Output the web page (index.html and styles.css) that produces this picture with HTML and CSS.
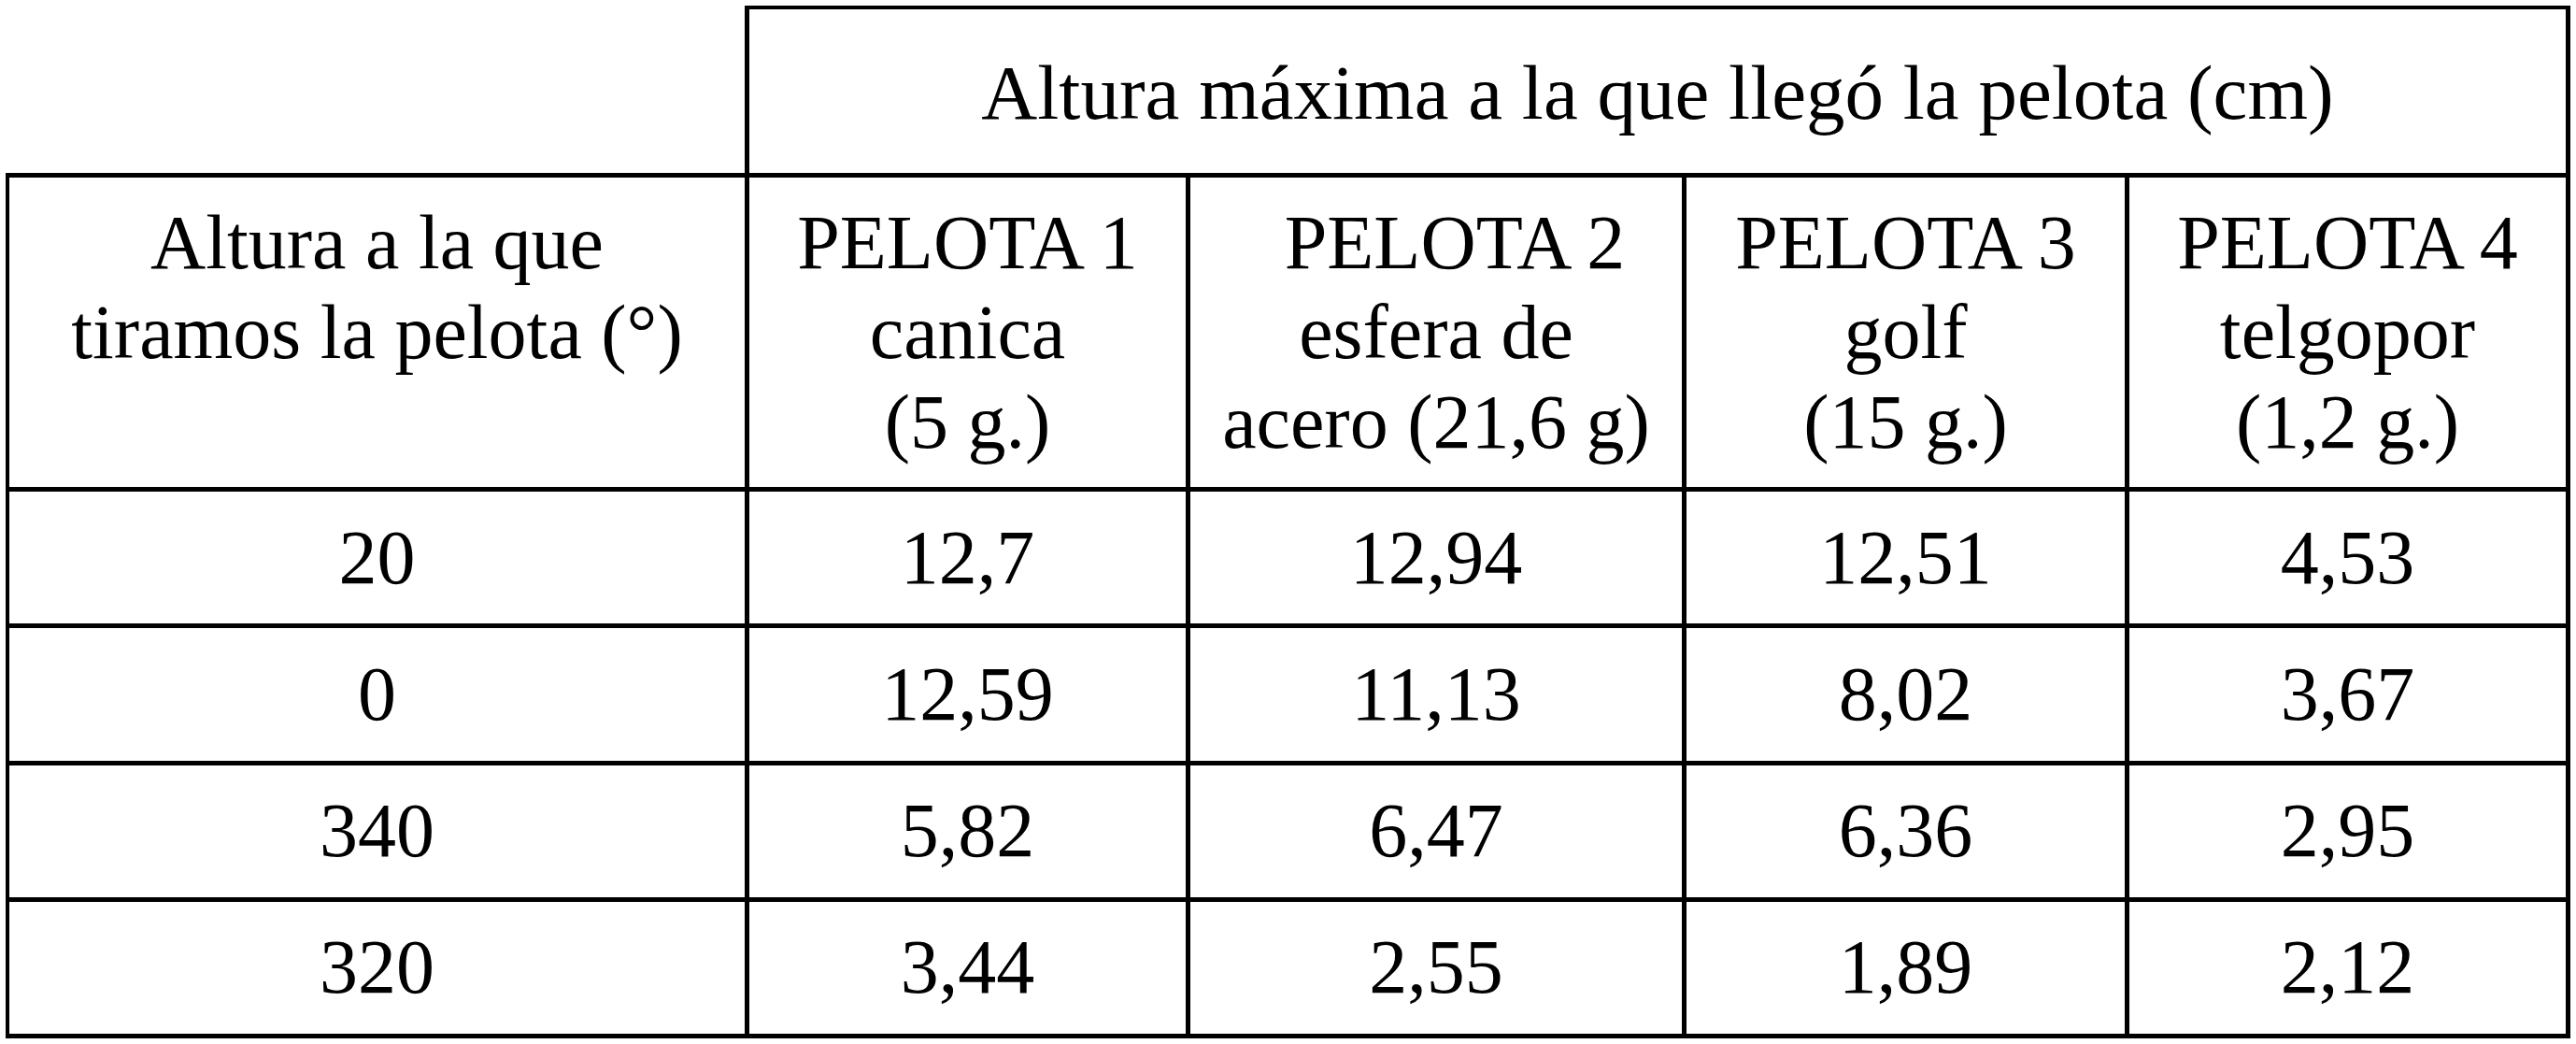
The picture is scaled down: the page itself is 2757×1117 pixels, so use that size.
FILE: index.html
```html
<!DOCTYPE html>
<html lang="es">
<head>
<meta charset="utf-8">
<title>Altura máxima a la que llegó la pelota</title>
<link rel="stylesheet" href="styles.css">
</head>
<body>
<div class="sheet" role="table">
  <div class="cell corner" role="columnheader"></div>
  <div class="cell title" role="columnheader"><span class="txt">Altura máxima a la que llegó la pelota (cm)</span></div>

  <div class="cell first head" role="columnheader"><span class="txt">Altura a la que<br>tiramos la pelota (°)</span></div>
  <div class="cell head" role="columnheader"><span class="txt">PELOTA 1<br>canica<br>(5 g.)</span></div>
  <div class="cell head" role="columnheader"><span class="txt"><span class="shift">PELOTA 2</span><br>esfera de<br>acero (21,6 g)</span></div>
  <div class="cell head" role="columnheader"><span class="txt">PELOTA 3<br>golf<br>(15 g.)</span></div>
  <div class="cell head" role="columnheader"><span class="txt">PELOTA 4<br>telgopor<br>(1,2 g.)</span></div>

  <div class="cell first" role="cell"><span class="txt">20</span></div>
  <div class="cell" role="cell"><span class="txt">12,7</span></div>
  <div class="cell" role="cell"><span class="txt">12,94</span></div>
  <div class="cell" role="cell"><span class="txt">12,51</span></div>
  <div class="cell" role="cell"><span class="txt">4,53</span></div>

  <div class="cell first" role="cell"><span class="txt">0</span></div>
  <div class="cell" role="cell"><span class="txt">12,59</span></div>
  <div class="cell" role="cell"><span class="txt">11,13</span></div>
  <div class="cell" role="cell"><span class="txt">8,02</span></div>
  <div class="cell" role="cell"><span class="txt">3,67</span></div>

  <div class="cell first" role="cell"><span class="txt">340</span></div>
  <div class="cell" role="cell"><span class="txt">5,82</span></div>
  <div class="cell" role="cell"><span class="txt">6,47</span></div>
  <div class="cell" role="cell"><span class="txt">6,36</span></div>
  <div class="cell" role="cell"><span class="txt">2,95</span></div>

  <div class="cell first" role="cell"><span class="txt">320</span></div>
  <div class="cell" role="cell"><span class="txt">3,44</span></div>
  <div class="cell" role="cell"><span class="txt">2,55</span></div>
  <div class="cell" role="cell"><span class="txt">1,89</span></div>
  <div class="cell" role="cell"><span class="txt">2,12</span></div>
</div>
</body>
</html>
```

FILE: styles.css
```css
html, body {
  margin: 0;
  padding: 0;
  background: #ffffff;
}

body {
  font-family: "Liberation Serif", "Times New Roman", serif;
  font-size: 82px;
  line-height: 96px;
  color: #000000;
}

.sheet {
  display: grid;
  grid-template-columns: 796px 472px 531px 474px 472px;
  grid-template-rows: 184px 336px repeat(4, 146.25px);
  width: max-content;
  margin: 6px 0 0 6px;
}

.cell {
  box-sizing: border-box;
  border-right: 5px solid #000000;
  border-bottom: 5px solid #000000;
  display: flex;
  align-items: center;
  justify-content: center;
  text-align: center;
  white-space: nowrap;
}

.txt {
  display: block;
}

.title {
  grid-column: 2 / span 4;
  border-top: 4px solid #000000;
  padding-top: 2px;
  font-size: 83px;
}

.first {
  border-left: 4px solid #000000;
}

.head {
  align-items: flex-start;
  padding-top: 22px;
}

.shift {
  padding-left: 40px;
}
```
